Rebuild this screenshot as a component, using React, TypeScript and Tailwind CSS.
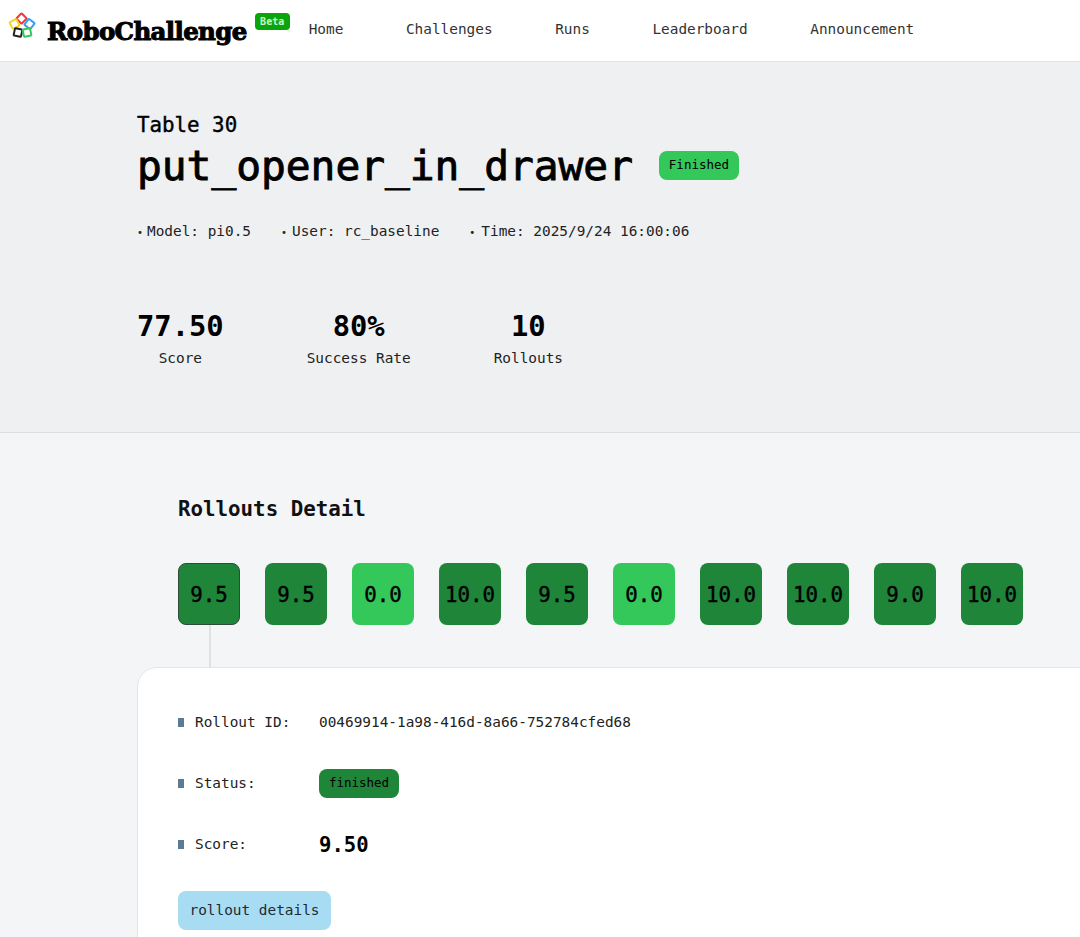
const mono = "font-['DejaVu_Sans_Mono','Liberation_Mono',monospace]"

const navItems = ["Home", "Challenges", "Runs", "Leaderboard", "Announcement"]

const rollouts = [
  { score: "9.5", ok: true },
  { score: "9.5", ok: true },
  { score: "0.0", ok: false },
  { score: "10.0", ok: true },
  { score: "9.5", ok: true },
  { score: "0.0", ok: false },
  { score: "10.0", ok: true },
  { score: "10.0", ok: true },
  { score: "9.0", ok: true },
  { score: "10.0", ok: true },
]

const stats = [
  { value: "77.50", label: "Score" },
  { value: "80%", label: "Success Rate" },
  { value: "10", label: "Rollouts" },
]

function Logo() {
  return (
    <svg width="28" height="28" viewBox="0 0 28 28" fill="none" strokeWidth="2" className="shrink-0 -mt-[10px]">
      <rect x="9.75" y="2.75" width="7.5" height="7.5" rx="0.8" stroke="#f03a3a" transform="rotate(45 13.5 6.5)" />
      <rect x="2.75" y="8.25" width="7.5" height="7.5" rx="0.8" stroke="#f5d327" transform="rotate(-28 6.5 12)" />
      <rect x="17.75" y="8.25" width="7.5" height="7.5" rx="0.8" stroke="#3a9df0" transform="rotate(38 21.5 12)" />
      <rect x="6.25" y="16.75" width="7.5" height="7.5" rx="0.8" stroke="#222222" transform="rotate(12 10 20.5)" />
      <rect x="15.25" y="16.75" width="7.5" height="7.5" rx="0.8" stroke="#35c759" transform="rotate(-12 19 20.5)" />
    </svg>
  )
}

function Field({ label, children }: { label: string; children: React.ReactNode }) {
  return (
    <div className="flex items-center h-[30px]">
      <span className="w-[6px] h-[9px] bg-[#5b7a94] mr-[11px]" />
      <span className="w-[124px] pt-[2px] text-[14.4px] text-[#222]">{label}</span>
      {children}
    </div>
  )
}

export default function App() {
  return (
    <div className={`${mono} h-[937px] w-[1080px] overflow-hidden bg-[#f3f5f7] text-black`}>
      <header className="h-[62px] bg-white border-b border-[#e2e3e5] flex items-center">
        <div className="ml-[8px] flex items-center">
          <Logo />
          <span className="ml-[11px] mt-[4px] font-['DejaVu_Serif',serif] font-bold text-[24.5px] tracking-[-0.65px] leading-none [-webkit-text-stroke:1px_black]">
            RoboChallenge
          </span>
          <span className="ml-[8px] -mt-[18px] h-[17px] w-[35px] rounded-[4px] bg-[#0aa50a] text-[#c9f5c9] text-[10px] font-bold flex items-center justify-center">
            Beta
          </span>
        </div>
        <nav className="ml-[19px] -mt-[2px] flex gap-[62.6px] text-[14.4px] text-[#333]">
          {navItems.map((item) => (
            <a key={item}>{item}</a>
          ))}
        </nav>
      </header>

      <section className="h-[371px] bg-[#eef0f2] border-b border-[#dcdee0] pl-[137px] pt-[49px]">
        <div className="text-[20.8px] leading-[28px] [-webkit-text-stroke:0.4px_black]">Table 30</div>
        <div className="flex items-center mt-[1px]">
          <h1 className="text-[41.2px] leading-[52px] [-webkit-text-stroke:0.9px_black]">put_opener_in_drawer</h1>
          <span className="ml-[26px] -mt-[2px] h-[29px] w-[80px] rounded-[8px] bg-[#34c759] text-[12.5px] flex items-center justify-center">
            Finished
          </span>
        </div>
        <div className="flex mt-[29px] text-[14.4px] leading-[20px] text-[#222]">
          <span className="before:content-['•'] before:text-[10px] before:mr-[4px] before:inline-block">Model: pi0.5</span>
          <span className="ml-[30px] before:content-['•'] before:text-[10px] before:mr-[5px] before:inline-block">User: rc_baseline</span>
          <span className="ml-[30px] before:content-['•'] before:text-[10px] before:mr-[6px] before:inline-block">Time: 2025/9/24 16:00:06</span>
        </div>
        <div className="flex gap-[83px] mt-[64px]">
          {stats.map((s) => (
            <div key={s.label} className="flex flex-col items-center">
              <span className="text-[28.8px] leading-[38px] font-bold">{s.value}</span>
              <span className="text-[14.4px] leading-[20px] mt-[3px] text-[#222]">{s.label}</span>
            </div>
          ))}
        </div>
      </section>

      <section className="pl-[137px]">
        <h2 className="ml-[41px] mt-[62px] text-[20.8px] leading-[28px] font-bold text-[#111]">Rollouts Detail</h2>
        <div className="ml-[41px] mt-[40px] flex gap-[25px]">
          {rollouts.map((r, i) => (
            <div
              key={i}
              className={`relative w-[62px] h-[62px] pt-[4px] shrink-0 rounded-[8px] flex items-center justify-center text-[20.8px] [-webkit-text-stroke:0.4px_black] ${
                r.ok ? "bg-[#1e8539]" : "bg-[#34c759]"
              } ${i === 0 ? "border border-[#2f4a38]" : ""}`}
            >
              {r.score}
              {i === 0 && <span className="absolute left-[30px] top-[61px] w-[2px] h-[43px] bg-[#dfe1e3]" />}
            </div>
          ))}
        </div>

        <div className="mt-[42px] w-[1100px] h-[400px] bg-white rounded-tl-[20px] border border-[#e4e6e8] pl-[40px] pt-[39px]">
          <div className="flex flex-col gap-[31px]">
            <Field label="Rollout ID:">
              <span className="pt-[2px] text-[14.4px] text-[#222]">00469914-1a98-416d-8a66-752784cfed68</span>
            </Field>
            <Field label="Status:">
              <span className="h-[29px] w-[80px] rounded-[8px] bg-[#1e8539] text-[12.5px] flex items-center justify-center">
                finished
              </span>
            </Field>
            <Field label="Score:">
              <span className="pt-[2px] text-[20.6px] font-bold">9.50</span>
            </Field>
          </div>
          <button className="mt-[32px] h-[39px] w-[153px] rounded-[8px] bg-[#a8dcf3] text-[14.4px] text-[#1c2a33] flex items-center justify-center">
            rollout details
          </button>
        </div>
      </section>
    </div>
  )
}
